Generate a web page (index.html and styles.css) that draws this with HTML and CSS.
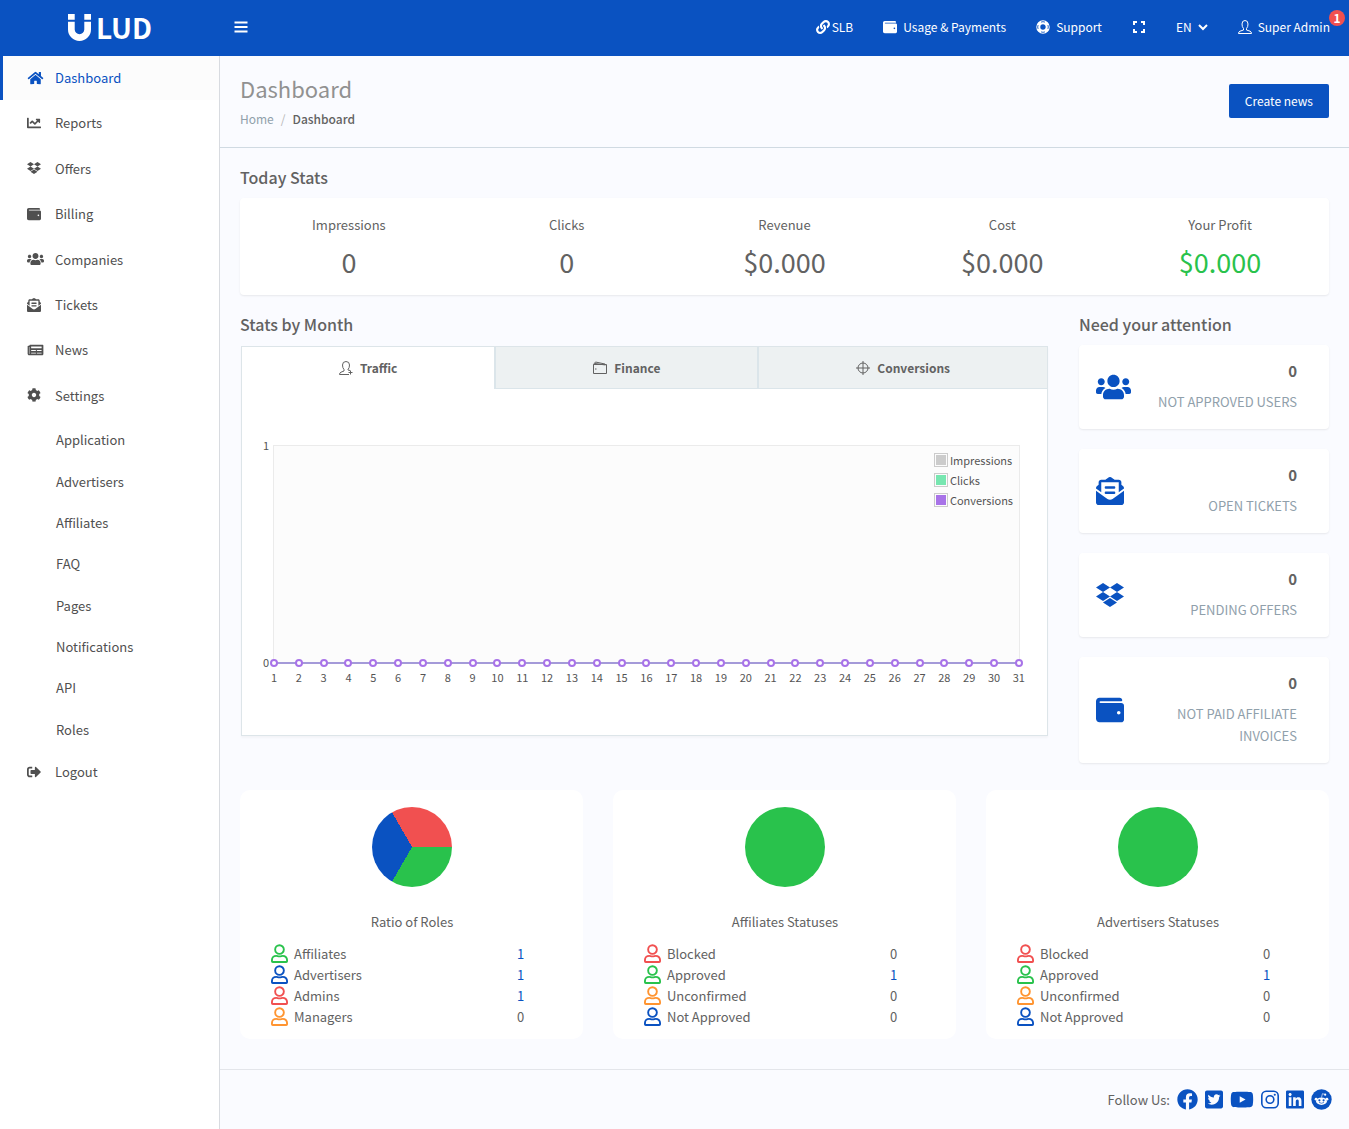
FILE: index.html
```html
<!DOCTYPE html>
<html lang="en">
<head>
    <meta charset="UTF-8">
    <meta name="viewport" content="width=device-width, initial-scale=1.0">
    <title>Dashboard</title>
    <link rel="stylesheet" href="styles.css">
</head>
<body>
    <!-- icon sprite -->
    <svg class="sprite" aria-hidden="true">
        <symbol id="home" viewBox="0 0 576 512"><path d="M280.37 148.26L96 300.11V464a16 16 0 0 0 16 16l112.06-.29a16 16 0 0 0 15.92-16V368a16 16 0 0 1 16-16h64a16 16 0 0 1 16 16v95.64a16 16 0 0 0 16 16.05L464 480a16 16 0 0 0 16-16V300L295.67 148.26a12.19 12.19 0 0 0-15.3 0zM571.6 251.47L488 182.56V44.05a12 12 0 0 0-12-12h-56a12 12 0 0 0-12 12v72.61L318.47 43a48 48 0 0 0-61 0L4.34 251.47a12 12 0 0 0-1.6 16.9l25.5 31A12 12 0 0 0 45.15 301l235.22-193.74a12.19 12.19 0 0 1 15.3 0L530.9 301a12 12 0 0 0 16.9-1.6l25.5-31a12 12 0 0 0-1.7-16.93z"/></symbol>
        <symbol id="chart" viewBox="0 0 512 512"><path d="M496 384H64V80c0-8.84-7.16-16-16-16H16C7.16 64 0 71.16 0 80v336c0 17.67 14.33 32 32 32h464c8.84 0 16-7.16 16-16v-32c0-8.84-7.16-16-16-16zM464 96H345.94c-21.38 0-32.09 25.85-16.97 40.97l32.4 32.4L288 242.75l-73.37-73.37c-12.5-12.5-32.76-12.5-45.25 0l-68.69 68.69c-6.25 6.25-6.25 16.38 0 22.63l22.62 22.62c6.25 6.25 16.38 6.25 22.63 0L192 237.25l73.37 73.37c12.5 12.5 32.76 12.5 45.25 0l96-96 32.4 32.4c15.12 15.12 40.97 4.41 40.97-16.97V112c.01-8.84-7.15-16-15.99-16z"/></symbol>
        <symbol id="dropbox" viewBox="0 0 528 512"><path d="M264.4 116.3l-132 84.3 132 84.3-132 84.3L0 284.1l132.3-84.3L0 116.3 132.3 32l132.1 84.3zM131.6 395.7l132-84.3 132 84.3-132 84.3-132-84.3zm132.8-111.6l132-84.3-132-83.6L395.7 32 528 116.3l-132.3 84.3L528 284.8l-132.3 84.3-131.3-85z"/></symbol>
        <symbol id="wallet" viewBox="0 0 512 512"><path d="M461.2 128H80c-8.84 0-16-7.16-16-16s7.16-16 16-16h384c8.84 0 16-7.16 16-16 0-26.51-21.49-48-48-48H64C28.65 32 0 60.65 0 96v320c0 35.35 28.65 64 64 64h397.2c28.02 0 50.8-21.53 50.8-48V176c0-26.47-22.78-48-50.8-48zM416 336c-17.67 0-32-14.33-32-32s14.33-32 32-32 32 14.33 32 32-14.33 32-32 32z"/></symbol>
        <symbol id="users" viewBox="0 0 640 512"><path d="M96 224c35.3 0 64-28.7 64-64s-28.7-64-64-64-64 28.7-64 64 28.7 64 64 64zm448 0c35.3 0 64-28.7 64-64s-28.7-64-64-64-64 28.7-64 64 28.7 64 64 64zm32 32h-64c-17.6 0-33.5 7.1-45.1 18.6 40.3 22.1 68.9 62 75.1 109.4h66c17.7 0 32-14.3 32-32v-32c0-35.3-28.7-64-64-64zm-256 0c61.9 0 112-50.1 112-112S381.9 32 320 32 208 82.1 208 144s50.1 112 112 112zm76.8 32h-8.3c-20.8 10-43.9 16-68.5 16s-47.6-6-68.5-16h-8.3C179.6 288 128 339.6 128 403.2V432c0 26.5 21.5 48 48 48h288c26.5 0 48-21.5 48-48v-28.8c0-63.6-51.6-115.2-115.2-115.2zm-223.7-13.4C161.5 263.1 145.6 256 128 256H64c-35.3 0-64 28.7-64 64v32c0 17.7 14.3 32 32 32h65.9c6.3-47.4 34.9-87.3 75.2-109.4z"/></symbol>
        <symbol id="envelope" viewBox="0 0 512 512"><path d="M176 216h160c8.84 0 16-7.16 16-16v-16c0-8.84-7.16-16-16-16H176c-8.84 0-16 7.16-16 16v16c0 8.84 7.16 16 16 16zm-16 80c0 8.84 7.16 16 16 16h160c8.84 0 16-7.16 16-16v-16c0-8.84-7.16-16-16-16H176c-8.84 0-16 7.16-16 16v16zm96 121.13c-16.42 0-32.84-5.06-46.86-15.19L0 250.86V464c0 26.51 21.49 48 48 48h416c26.51 0 48-21.49 48-48V250.86L302.86 401.94c-14.02 10.12-30.44 15.19-46.86 15.19zm237.61-254.18c-8.85-6.94-17.24-13.47-29.61-22.81V96c0-26.51-21.49-48-48-48h-77.55c-3.04-2.2-5.87-4.26-9.04-6.56C312.6 29.17 279.2-.35 256 0c-23.2-.35-56.59 29.17-73.41 41.44-3.17 2.3-6 4.36-9.04 6.56H96c-26.51 0-48 21.49-48 48v44.14c-12.37 9.33-20.76 15.87-29.61 22.81A47.995 47.995 0 0 0 0 200.72v10.65l96 69.35V96h320v184.72l96-69.35v-10.65c0-14.74-6.78-28.67-18.39-37.77z"/></symbol>
        <symbol id="news" viewBox="0 0 576 512"><path d="M552 64H88c-13.255 0-24 10.745-24 24v8H24c-13.255 0-24 10.745-24 24v272c0 30.928 25.072 56 56 56h472c26.51 0 48-21.49 48-48V88c0-13.255-10.745-24-24-24zM56 400a8 8 0 0 1-8-8V144h16v248a8 8 0 0 1-8 8zm236-16H140c-6.627 0-12-5.373-12-12v-8c0-6.627 5.373-12 12-12h152c6.627 0 12 5.373 12 12v8c0 6.627-5.373 12-12 12zm208 0H348c-6.627 0-12-5.373-12-12v-8c0-6.627 5.373-12 12-12h152c6.627 0 12 5.373 12 12v8c0 6.627-5.373 12-12 12zm-208-96H140c-6.627 0-12-5.373-12-12v-8c0-6.627 5.373-12 12-12h152c6.627 0 12 5.373 12 12v8c0 6.627-5.373 12-12 12zm208 0H348c-6.627 0-12-5.373-12-12v-8c0-6.627 5.373-12 12-12h152c6.627 0 12 5.373 12 12v8c0 6.627-5.373 12-12 12zm0-96H140c-6.627 0-12-5.373-12-12v-40c0-6.627 5.373-12 12-12h360c6.627 0 12 5.373 12 12v40c0 6.627-5.373 12-12 12z"/></symbol>
        <symbol id="cog" viewBox="0 0 512 512"><path d="M487.4 315.7l-42.6-24.6c4.3-23.2 4.3-47 0-70.2l42.6-24.6c4.9-2.8 7.1-8.6 5.5-14-11.1-35.6-30-67.8-54.7-94.6-3.8-4.1-10-5.1-14.8-2.3L380.8 110c-17.9-15.4-38.5-27.3-60.8-35.1V25.8c0-5.6-3.9-10.5-9.4-11.7-36.7-8.2-74.3-7.8-109.2 0-5.5 1.2-9.4 6.1-9.4 11.7V75c-22.2 7.9-42.8 19.8-60.8 35.1L88.7 85.5c-4.9-2.8-11-1.9-14.8 2.3-24.7 26.7-43.6 58.9-54.7 94.6-1.7 5.4.6 11.2 5.5 14L67.3 221c-4.3 23.2-4.3 47 0 70.2l-42.6 24.6c-4.9 2.8-7.1 8.6-5.5 14 11.1 35.6 30 67.8 54.7 94.6 3.8 4.1 10 5.1 14.8 2.3l42.6-24.6c17.9 15.4 38.5 27.3 60.8 35.1v49.2c0 5.6 3.9 10.5 9.4 11.7 36.7 8.2 74.3 7.8 109.2 0 5.5-1.2 9.4-6.1 9.4-11.7v-49.2c22.2-7.9 42.8-19.8 60.8-35.1l42.6 24.6c4.9 2.8 11 1.9 14.8-2.3 24.7-26.7 43.6-58.9 54.7-94.6 1.5-5.5-.7-11.3-5.6-14.1zM256 336c-44.1 0-80-35.9-80-80s35.9-80 80-80 80 35.9 80 80-35.9 80-80 80z"/></symbol>
        <symbol id="logout" viewBox="0 0 512 512"><path d="M497 273L329 441c-15 15-41 4.5-41-17v-96H152c-13.3 0-24-10.7-24-24v-96c0-13.3 10.7-24 24-24h136V88c0-21.4 25.9-32 41-17l168 168c9.3 9.4 9.3 24.6 0 34zM192 436v-40c0-6.6-5.4-12-12-12H96c-17.7 0-32-14.3-32-32V160c0-17.7 14.3-32 32-32h84c6.6 0 12-5.4 12-12V76c0-6.6-5.4-12-12-12H96c-53 0-96 43-96 96v192c0 53 43 96 96 96h84c6.6 0 12-5.4 12-12z"/></symbol>
        <symbol id="link" viewBox="0 0 512 512"><path d="M326.612 185.391c59.747 59.809 58.927 155.698.36 214.59-.11.12-.24.25-.36.37l-67.2 67.2c-59.27 59.27-155.699 59.262-214.96 0-59.27-59.26-59.27-155.7 0-214.96l37.106-37.106c9.84-9.84 26.786-3.3 27.294 10.606.648 17.722 3.826 35.527 9.69 52.721 1.986 5.822.567 12.262-3.783 16.612l-13.087 13.087c-28.026 28.026-28.905 73.66-1.155 101.96 28.024 28.579 74.086 28.749 102.325.51l67.2-67.19c28.191-28.191 28.073-73.757 0-101.83-3.701-3.694-7.429-6.564-10.341-8.569a16.037 16.037 0 0 1-6.947-12.606c-.396-10.567 3.348-21.456 11.698-29.806l21.054-21.055c5.521-5.521 14.182-6.199 20.584-1.731a152.482 152.482 0 0 1 20.522 17.197zM467.547 44.449c-59.261-59.262-155.69-59.27-214.96 0l-67.2 67.2c-.12.12-.25.25-.36.37-58.566 58.892-59.387 154.781.36 214.59a152.454 152.454 0 0 0 20.521 17.196c6.402 4.468 15.064 3.789 20.584-1.731l21.054-21.055c8.35-8.35 12.094-19.239 11.698-29.806a16.037 16.037 0 0 0-6.947-12.606c-2.912-2.005-6.64-4.875-10.341-8.569-28.073-28.073-28.191-73.639 0-101.83l67.2-67.19c28.239-28.239 74.3-28.069 102.325.51 27.75 28.3 26.872 73.934-1.155 101.96l-13.087 13.087c-4.35 4.35-5.769 10.79-3.783 16.612 5.864 17.194 9.042 34.999 9.69 52.721.509 13.906 17.454 20.446 27.294 10.606l37.106-37.106c59.271-59.259 59.271-155.699.001-214.959z"/></symbol>
        <symbol id="ring" viewBox="0 0 16 16"><path fill="none" stroke="currentColor" stroke-width="4.600" d="M8 2.600a5.400 5.400 0 1 1 0 10.800a5.400 5.400 0 0 1 0-10.800z"/><path fill="none" stroke="#0a52c1" d="M5.800 2.400Q8 1.400 10.200 2.400M5.800 13.600Q8 14.600 10.200 13.600M2.400 5.800Q1.400 8 2.400 10.200M13.600 5.800Q14.600 8 13.600 10.200"/></symbol>
        <symbol id="person" viewBox="0 0 18 20"><path fill="none" stroke="currentColor" stroke-width="2" d="M9 1.200a4.600 4.600 0 1 1 0 9.200a4.600 4.600 0 0 1 0-9.200zM5.600 12.500C3 12.500 1 14.300 1 17v1.200q0 .8.900.8h14.200q.9 0 .9-.8V17c0-2.700-2-4.500-4.600-4.500c-1 0-1.800.6-3.400.6s-2.400-.6-3.400-.6z"/></symbol>
        <symbol id="facebook" viewBox="0 0 512 512"><path d="M504 256C504 119 393 8 256 8S8 119 8 256c0 123.78 90.69 226.38 209.25 245V327.69h-63V256h63v-54.64c0-62.15 37-96.48 93.67-96.48 27.14 0 55.52 4.84 55.52 4.84v61h-31.28c-30.8 0-40.41 19.12-40.41 38.73V256h68.78l-11 71.69h-57.78V501C413.31 482.38 504 379.78 504 256z"/></symbol>
        <symbol id="twitter" viewBox="0 0 448 512"><path d="M400 32H48C21.500 32 0 53.500 0 80v352c0 26.500 21.500 48 48 48h352c26.500 0 48-21.500 48-48V80c0-26.500-21.500-48-48-48zm-48.900 158.800c.2 2.800.2 5.700.2 8.500 0 86.700-66 186.600-186.600 186.600-37.200 0-71.700-10.800-100.700-29.400 5.300.6 10.400.8 15.800.8 30.700 0 58.900-10.400 81.400-28-28.800-.6-53-19.500-61.300-45.500 10.100 1.500 19.200 1.500 29.600-1.200-30-6.100-52.500-32.500-52.500-64.400v-.8c8.700 4.900 18.900 7.900 29.600 8.300a65.447 65.447 0 0 1-29.200-54.600c0-12.200 3.200-23.400 8.900-33.100 32.300 39.800 80.800 65.800 135.200 68.600-9.300-44.500 24-80.600 64-80.600 18.900 0 35.900 7.900 47.900 20.700 14.800-2.800 29-8.300 41.600-15.800-4.900 15.200-15.200 28-28.800 36.100 13.200-1.400 26-5.100 37.800-10.200-8.900 13.100-20.100 24.700-32.900 34z"/></symbol>
        <symbol id="youtube" viewBox="0 0 576 512"><path d="M549.655 124.083c-6.281-23.65-24.787-42.276-48.284-48.597C458.781 64 288 64 288 64S117.22 64 74.629 75.486c-23.497 6.322-42.003 24.947-48.284 48.597-11.412 42.867-11.412 132.305-11.412 132.305s0 89.438 11.412 132.305c6.281 23.65 24.787 41.5 48.284 47.821C117.22 448 288 448 288 448s170.78 0 213.371-11.486c23.497-6.321 42.003-24.171 48.284-47.821 11.412-42.867 11.412-132.305 11.412-132.305s0-89.438-11.412-132.305zm-317.51 213.508V175.185l142.739 81.205-142.739 81.201z"/></symbol>
        <symbol id="instagram" viewBox="0 0 448 512"><rect x="20" y="52" width="408" height="408" rx="110" fill="none" stroke="currentColor" stroke-width="40"/><circle cx="224" cy="256" r="95" fill="none" stroke="currentColor" stroke-width="40"/><circle cx="343" cy="137" r="27"/></symbol>
        <symbol id="linkedin" viewBox="0 0 448 512"><path d="M416 32H31.9C14.3 32 0 46.5 0 64.3v383.4C0 465.5 14.3 480 31.9 480H416c17.6 0 32-14.5 32-32.3V64.3c0-17.8-14.4-32.3-32-32.3zM135.4 416H69V202.2h66.5V416zm-33.2-243c-21.3 0-38.5-17.3-38.5-38.5S80.9 96 102.2 96c21.2 0 38.5 17.3 38.5 38.5 0 21.3-17.2 38.5-38.5 38.5zm282.1 243h-66.4V312c0-24.8-.5-56.7-34.5-56.7-34.6 0-39.9 27-39.9 54.9V416h-66.4V202.2h63.7v29.2h.9c8.9-16.8 30.6-34.5 62.9-34.500 67.200 0 79.700 44.300 79.700 101.900V416z"/></symbol>
        <symbol id="reddit" viewBox="0 0 512 512"><circle cx="256" cy="256" r="248"/><g fill="#fafbff"><ellipse cx="256" cy="297" rx="132" ry="92"/><circle cx="124" cy="247" r="35"/><circle cx="388" cy="247" r="35"/><circle cx="346" cy="138" r="26"/></g><path d="M256 207l22-92 68 18" fill="none" stroke="#fafbff" stroke-width="16"/><circle cx="205" cy="277" r="26"/><circle cx="307" cy="277" r="26"/><path d="M204 332q52 36 104 0" fill="none" stroke="currentColor" stroke-width="16" stroke-linecap="round"/></symbol>
    </svg>

    <header class="topbar">
        <a href="#" class="logo">
            <svg class="logo-mark" viewBox="0 0 24 28" fill="currentColor"><path d="M0 0h7v6H0zM17 0h7v6h-7zM0 8h7v8a5 5 0 0 0 10 0V8h7v8a12 12 0 0 1-24 0z"/></svg>
            <span>LUD</span>
        </a>
        <button class="menu-toggle" type="button" aria-label="Toggle menu">
            <svg viewBox="0 0 14 14" fill="currentColor"><path d="M.5 1.500h13v2H.500zM.5 6h13v2H.500zM.5 10.500h13v2H.500z"/></svg>
        </button>
        <nav class="topnav">
            <a href="#" class="slb"><svg class="icon"><use href="#link"/></svg>SLB</a>
            <a href="#"><svg class="icon"><use href="#wallet"/></svg>Usage &amp; Payments</a>
            <a href="#"><svg class="icon"><use href="#ring"/></svg>Support</a>
            <button type="button" aria-label="Full screen"><svg class="icon" viewBox="0 0 14 14" fill="none" stroke="currentColor" stroke-width="2"><path d="M2 5V2h3M9 2h3v3M12 9v3H9M5 12H2V9"/></svg></button>
            <button type="button">EN<svg class="caret" viewBox="0 0 10 10" fill="none" stroke="currentColor" stroke-width="2"><path d="M1 3l4 4 4-4"/></svg></button>
            <a href="#" class="account"><svg class="icon" viewBox="0 0 14 14" fill="none" stroke="currentColor"><path d="M4 4Q4 .5 7 .5T10 4Q10 7 8.500 8.500V10L12 11.200Q13.500 11.800 13.500 13.500H.5Q.5 11.800 2 11.200L5.500 10V8.500Q4 7 4 4z"/></svg>Super Admin<span class="badge">1</span></a>
        </nav>
    </header>

    <div class="page">
        <aside class="sidebar">
            <ul class="menu">
                <li><a href="#" class="active"><svg class="wide"><use href="#home"/></svg>Dashboard</a></li>
                <li><a href="#"><svg><use href="#chart"/></svg>Reports</a></li>
                <li><a href="#"><svg><use href="#dropbox"/></svg>Offers</a></li>
                <li><a href="#"><svg><use href="#wallet"/></svg>Billing</a></li>
                <li><a href="#"><svg class="wide"><use href="#users"/></svg>Companies</a></li>
                <li><a href="#"><svg><use href="#envelope"/></svg>Tickets</a></li>
                <li><a href="#"><svg class="wide"><use href="#news"/></svg>News</a></li>
                <li><a href="#"><svg><use href="#cog"/></svg>Settings</a>
                    <ul class="submenu">
                        <li><a href="#">Application</a></li>
                        <li><a href="#">Advertisers</a></li>
                        <li><a href="#">Affiliates</a></li>
                        <li><a href="#">FAQ</a></li>
                        <li><a href="#">Pages</a></li>
                        <li><a href="#">Notifications</a></li>
                        <li><a href="#">API</a></li>
                        <li><a href="#">Roles</a></li>
                    </ul>
                </li>
                <li><a href="#"><svg><use href="#logout"/></svg>Logout</a></li>
            </ul>
        </aside>

        <div class="content">
            <div class="page-header">
                <div>
                    <h1>Dashboard</h1>
                    <div class="breadcrumb"><a href="#">Home</a><span class="sep">/</span><strong>Dashboard</strong></div>
                </div>
                <button class="btn" type="button">Create news</button>
            </div>

            <main>
                <h2>Today Stats</h2>
                <div class="card today">
                    <div><span>Impressions</span><b>0</b></div>
                    <div><span>Clicks</span><b>0</b></div>
                    <div><span>Revenue</span><b>$0.000</b></div>
                    <div><span>Cost</span><b>$0.000</b></div>
                    <div><span>Your Profit</span><b class="profit">$0.000</b></div>
                </div>

                <div class="columns">
                    <section class="month">
                        <h2>Stats by Month</h2>
                        <div class="chart-box">
                            <div class="tabs" role="tablist">
                                <button type="button" role="tab" class="active" aria-selected="true"><svg viewBox="0 0 14 14" fill="none" stroke="currentColor"><path d="M11 9.500L9 9V8.500Q10.500 7 10.500 4Q10.500 .5 7 .5T3.500 4Q3.500 7 5 8.500V10L2 11.200Q.5 11.800.5 13.500H10M11.500 9.500v4M9.500 11.500h4"/></svg>Traffic</button>
                                <button type="button" role="tab"><svg viewBox="0 0 14 14" fill="none" stroke="currentColor"><path d="M.5 3.500h13v9H.500zM.5 3.500l2-2.500L12 3M2 2.500L12.500 4M2 8h1.500"/></svg>Finance</button>
                                <button type="button" role="tab"><svg viewBox="0 0 14 14" fill="none" stroke="currentColor"><circle cx="7" cy="7" r="5"/><path d="M7 0v14M0 7h14"/></svg>Conversions</button>
                            </div>
                            <div class="chart">
                                <div class="y-axis"><span>1</span><span>0</span></div>
                                <div class="plot">
                                    <ul class="legend">
                                        <li><i class="swatch grey"></i>Impressions</li>
                                        <li><i class="swatch mint"></i>Clicks</li>
                                        <li><i class="swatch violet"></i>Conversions</li>
                                    </ul>
                                    <ol class="days">
                                        <li>1</li><li>2</li><li>3</li><li>4</li><li>5</li><li>6</li><li>7</li><li>8</li>
                                        <li>9</li><li>10</li><li>11</li><li>12</li><li>13</li><li>14</li><li>15</li><li>16</li>
                                        <li>17</li><li>18</li><li>19</li><li>20</li><li>21</li><li>22</li><li>23</li><li>24</li>
                                        <li>25</li><li>26</li><li>27</li><li>28</li><li>29</li><li>30</li><li>31</li>
                                    </ol>
                                </div>
                            </div>
                        </div>
                    </section>

                    <section class="attention">
                        <h2>Need your attention</h2>
                        <a href="#" class="card notice"><svg class="wide"><use href="#users"/></svg><span><b>0</b>NOT APPROVED USERS</span></a>
                        <a href="#" class="card notice"><svg><use href="#envelope"/></svg><span><b>0</b>OPEN TICKETS</span></a>
                        <a href="#" class="card notice"><svg><use href="#dropbox"/></svg><span><b>0</b>PENDING OFFERS</span></a>
                        <a href="#" class="card notice"><svg><use href="#wallet"/></svg><span><b>0</b>NOT PAID AFFILIATE INVOICES</span></a>
                    </section>
                </div>

                <div class="ratios">
                    <section class="ratio">
                        <div class="pie roles"></div>
                        <h3>Ratio of Roles</h3>
                        <table>
                            <tr><th><svg class="green"><use href="#person"/></svg>Affiliates</th><td><a href="#">1</a></td></tr>
                            <tr><th><svg class="blue"><use href="#person"/></svg>Advertisers</th><td><a href="#">1</a></td></tr>
                            <tr><th><svg class="red"><use href="#person"/></svg>Admins</th><td><a href="#">1</a></td></tr>
                            <tr><th><svg class="orange"><use href="#person"/></svg>Managers</th><td>0</td></tr>
                        </table>
                    </section>
                    <section class="ratio">
                        <div class="pie"></div>
                        <h3>Affiliates Statuses</h3>
                        <table>
                            <tr><th><svg class="red"><use href="#person"/></svg>Blocked</th><td>0</td></tr>
                            <tr><th><svg class="green"><use href="#person"/></svg>Approved</th><td><a href="#">1</a></td></tr>
                            <tr><th><svg class="orange"><use href="#person"/></svg>Unconfirmed</th><td>0</td></tr>
                            <tr><th><svg class="blue"><use href="#person"/></svg>Not Approved</th><td>0</td></tr>
                        </table>
                    </section>
                    <section class="ratio">
                        <div class="pie"></div>
                        <h3>Advertisers Statuses</h3>
                        <table>
                            <tr><th><svg class="red"><use href="#person"/></svg>Blocked</th><td>0</td></tr>
                            <tr><th><svg class="green"><use href="#person"/></svg>Approved</th><td><a href="#">1</a></td></tr>
                            <tr><th><svg class="orange"><use href="#person"/></svg>Unconfirmed</th><td>0</td></tr>
                            <tr><th><svg class="blue"><use href="#person"/></svg>Not Approved</th><td>0</td></tr>
                        </table>
                    </section>
                </div>
            </main>

            <footer>
                <span>Follow Us:</span>
                <a href="#" aria-label="Facebook"><svg class="round"><use href="#facebook"/></svg></a>
                <a href="#" aria-label="Twitter"><svg><use href="#twitter"/></svg></a>
                <a href="#" aria-label="YouTube"><svg class="wide"><use href="#youtube"/></svg></a>
                <a href="#" aria-label="Instagram"><svg><use href="#instagram"/></svg></a>
                <a href="#" aria-label="LinkedIn"><svg><use href="#linkedin"/></svg></a>
                <a href="#" aria-label="Reddit"><svg class="round"><use href="#reddit"/></svg></a>
            </footer>
        </div>
    </div>
</body>
</html>
```
FILE: styles.css
```css
*, *::before {
    box-sizing: border-box;
}
body {
    margin: 0;
    min-height: 100vh;
    display: flex;
    flex-direction: column;
    font-family: "Noto Sans CJK SC", "Open Sans", sans-serif;
    font-size: 13px;
    line-height: 22px;
    color: #626262;
    background: #fafbff;
}
a {
    color: #0a52c1;
    text-decoration: none;
}
button {
    font: inherit;
    color: inherit;
    background: none;
    border: 0;
    padding: 0;
    cursor: pointer;
}
ul, ol {
    list-style: none;
    margin: 0;
    padding: 0;
}
svg {
    fill: currentColor;
    flex: none;
}
svg[fill="none"] {
    fill: none;
}
.sprite {
    display: none;
}

/* top bar */
.topbar {
    display: flex;
    align-items: center;
    height: 56px;
    padding: 0 19px 2px 0;
    background: #0a52c1;
    color: #fff;
}
.logo {
    width: 220px;
    display: flex;
    align-items: center;
    justify-content: center;
    gap: 5px;
    color: #fff;
    font-size: 28px;
    font-weight: 700;
    line-height: 28px;
}
.logo-mark {
    width: 23px;
    height: 27px;
}
.menu-toggle {
    margin-left: 14px;
    display: flex;
}
.menu-toggle svg {
    width: 14px;
    height: 14px;
}
.topnav {
    margin-left: auto;
    display: flex;
    align-items: center;
    gap: 30px;
    font-size: 12px;
}
.topnav a, .topnav button {
    display: flex;
    align-items: center;
    gap: 6px;
    color: #fff;
}
.topnav .slb {
    gap: 2px;
}
.topnav .icon {
    width: 14px;
    height: 14px;
}
.topnav .caret {
    width: 10px;
    height: 10px;
}
.account {
    position: relative;
}
.badge {
    position: absolute;
    right: -15px;
    top: -6px;
    width: 16px;
    height: 16px;
    border-radius: 50%;
    background: #f15050;
    font-weight: 700;
    line-height: 16px;
    text-align: center;
}

.page {
    flex: 1;
    display: flex;
}

/* sidebar */
.sidebar {
    width: 220px;
    flex: none;
    background: #fff;
    border-right: 1px solid #d8dbe0;
}
.menu a {
    display: flex;
    align-items: center;
    padding: 10px 0 11px 27px;
    margin-bottom: 1px;
    line-height: 1.8;
    color: #505050;
}
.menu a.active {
    padding-left: 24px;
    border-left: 3px solid #0a52c1;
    background: #fcfcfc;
    color: #0a52c1;
}
.menu svg {
    width: 14px;
    height: 14px;
    margin-right: 14px;
}
.menu svg.wide {
    width: 17px;
    margin-right: 11px;
}
.submenu a {
    padding: 9px 0 9px 56px;
    margin: 0;
}

/* page header */
.content {
    flex: 1;
    min-width: 0;
    display: flex;
    flex-direction: column;
}
.page-header {
    display: flex;
    align-items: center;
    justify-content: space-between;
    height: 92px;
    padding: 0 20px 1px;
    border-bottom: 1px solid #d0dae2;
}
h1 {
    margin: 0 0 5px;
    font-size: 22px;
    font-weight: 400;
    line-height: 30px;
    color: #919191;
}
.breadcrumb {
    font-size: 12px;
}
.breadcrumb a {
    color: #90a0ab;
}
.breadcrumb strong {
    font-weight: 500;
}
.sep {
    margin: 0 7px;
    color: #b8b8b8;
}
.btn {
    height: 34px;
    padding: 0 16px;
    border-radius: 2px;
    background: #0a52c1;
    color: #fff;
    font-size: 12px;
}

main {
    flex: 1;
    padding: 18px 20px 30px;
}
h2 {
    margin: 0 0 10px;
    font-size: 16px;
    font-weight: 500;
    line-height: 22px;
}
.card {
    background: #fff;
    border-radius: 4px;
    box-shadow: 0 1px 2px rgba(0, 0, 0, 0.08);
}
.today {
    display: flex;
    padding: 16px 0 13px;
    margin-bottom: 18px;
    text-align: center;
}
.today div {
    flex: 1;
}
.today span, .today b {
    display: block;
}
.today b {
    margin-top: 6px;
    font-size: 27px;
    font-weight: 400;
    line-height: 40px;
}
.today .profit {
    color: #29c24c;
}

/* month chart */
.columns {
    display: flex;
    gap: 30px;
}
.month {
    flex: 1;
    min-width: 0;
}
.chart-box {
    margin: 11px 1px 0;
    border: 1px solid #dde5e9;
    background: #fff;
    box-shadow: 0 2px 2px rgba(0, 0, 0, 0.03);
}
.tabs {
    display: flex;
}
.tabs button {
    flex: 1 1 auto;
    display: flex;
    align-items: center;
    justify-content: center;
    gap: 7px;
    height: 42px;
    border-left: 2px solid #dbe5ea;
    border-bottom: 1px solid #dbe5ea;
    background: #edf1f2;
    font-size: 12px;
    font-weight: 700;
}
.tabs button.active {
    border-left: 0;
    border-color: transparent;
    background: #fff;
}
.tabs svg {
    width: 14px;
    height: 14px;
}
.chart {
    display: flex;
    padding: 56px 27px 72px 21px;
    font-size: 11px;
    line-height: 14px;
    color: #545454;
}
.y-axis {
    width: 10px;
    display: flex;
    flex-direction: column;
    justify-content: space-between;
    margin: -7px 0 -6px;
}
.plot {
    flex: 1;
    min-width: 0;
    height: 218px;
    position: relative;
    border: 1px solid #ebebeb;
    background: #fcfcfc;
}
.legend {
    position: absolute;
    right: 6px;
    top: 4px;
    line-height: 20px;
}
.legend li {
    display: flex;
    align-items: center;
    gap: 2px;
}
.swatch {
    width: 14px;
    height: 14px;
    padding: 1px;
    border: 1px solid #ccc;
    background-clip: content-box;
}
.grey { background-color: #ccc; }
.mint { background-color: #77e6b0; }
.violet { background-color: #a873e8; }

/* data points sit on the bottom edge of the plot */
.days {
    position: absolute;
    left: -12px;
    right: -12px;
    top: 213px;
    display: flex;
    justify-content: space-between;
}
.days::before {
    content: "";
    position: absolute;
    left: 12px;
    right: 12px;
    top: 3px;
    height: 2px;
    background: #a49ad9;
}
.days li {
    width: 24px;
    position: relative;
    text-align: center;
}
.days li::before {
    content: "";
    display: block;
    width: 8px;
    height: 8px;
    margin: 0 auto 3px;
    border: 2px solid #a873e8;
    border-radius: 50%;
    background: #fff;
}

/* attention cards */
.attention {
    width: 250px;
    flex: none;
}
.notice {
    display: flex;
    align-items: center;
    justify-content: space-between;
    padding: 15px 32px 16px 17px;
    margin-bottom: 20px;
    color: #90a0ab;
    text-align: right;
}
.notice svg {
    width: 28px;
    height: 28px;
    color: #0a52c1;
}
.notice svg.wide {
    width: 35px;
}
.notice span {
    max-width: 140px;
}
.notice b {
    display: block;
    margin-bottom: 9px;
    font-size: 15px;
    font-weight: 700;
    color: #626262;
}

/* ratio cards */
.ratios {
    display: grid;
    grid-template-columns: repeat(3, 1fr);
    gap: 30px;
    margin-top: 7px;
}
.ratio {
    padding: 17px 30px 12px 31px;
    border-radius: 10px;
    background: #fff;
}
.pie {
    width: 80px;
    height: 80px;
    margin: 0 auto 24px;
    border-radius: 50%;
    background: #29c24c;
}
.pie.roles {
    background: conic-gradient(from 90deg, #29c24c 0 120deg, #0a52c1 120deg 240deg, #f15050 240deg);
}
h3 {
    margin: 0 0 10px;
    font-size: 13px;
    font-weight: 400;
    text-align: center;
}
.ratio table {
    width: 100%;
    border-collapse: collapse;
    line-height: 21px;
}
.ratio th, .ratio td {
    padding: 0;
    font-weight: 400;
    text-align: left;
}
.ratio th {
    display: flex;
    align-items: center;
    gap: 6px;
}
.ratio td {
    width: 36px;
}
.ratio svg {
    width: 17px;
    height: 19px;
}
.green { color: #29c24c; }
.blue { color: #0a52c1; }
.red { color: #f15050; }
.orange { color: #ff9430; }

footer {
    display: flex;
    align-items: center;
    justify-content: flex-end;
    gap: 7px;
    height: 60px;
    padding-right: 17px;
    border-top: 1px solid #e3e5ea;
}
footer a {
    display: flex;
}
footer svg {
    width: 18px;
    height: 21px;
}
footer svg.round {
    width: 21px;
}
footer svg.wide {
    width: 24px;
}
```
